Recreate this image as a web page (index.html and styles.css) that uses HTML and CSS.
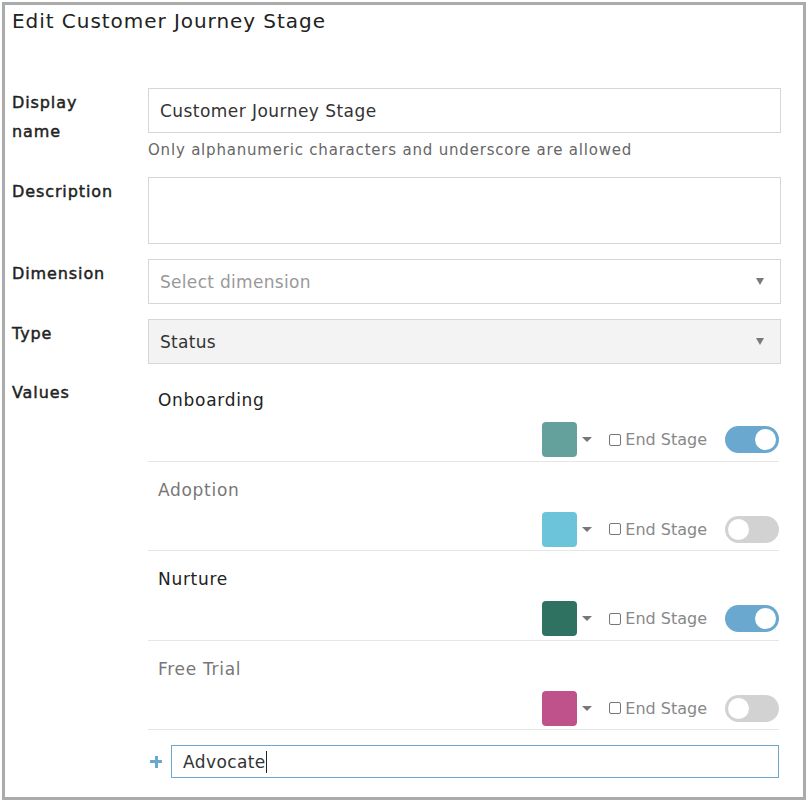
FILE: index.html
```html
<!DOCTYPE html>
<html>
<head>
<meta charset="utf-8">
<link rel="stylesheet" href="styles.css">
</head>
<body>
<div class="dialog">
  <h1 class="title">Edit Customer Journey Stage</h1>
  <div class="form">
    <div class="field">
      <div class="label">Display name</div>
      <div class="control">
        <div class="input">Customer Journey Stage</div>
        <div class="help">Only alphanumeric characters and underscore are allowed</div>
      </div>
    </div>
    <div class="field">
      <div class="label">Description</div>
      <div class="control"><div class="textarea"></div></div>
    </div>
    <div class="field">
      <div class="label">Dimension</div>
      <div class="control">
        <div class="select"><span class="placeholder">Select dimension</span><span class="caret"></span></div>
      </div>
    </div>
    <div class="field">
      <div class="label">Type</div>
      <div class="control">
        <div class="select disabled"><span>Status</span><span class="caret"></span></div>
      </div>
    </div>
    <div class="field values-field">
      <div class="label values-label">Values</div>
      <div class="control">
        <div class="value-row">
          <div class="value-name">Onboarding</div>
          <div class="value-controls">
            <span class="swatch" style="background:#64a09c"></span><span class="swatch-caret"></span>
            <label class="end-stage"><span class="checkbox"></span>End Stage</label>
            <span class="toggle on"><span class="knob"></span></span>
          </div>
        </div>
        <div class="value-row">
          <div class="value-name inactive">Adoption</div>
          <div class="value-controls">
            <span class="swatch" style="background:#6bc4da"></span><span class="swatch-caret"></span>
            <label class="end-stage"><span class="checkbox"></span>End Stage</label>
            <span class="toggle"><span class="knob"></span></span>
          </div>
        </div>
        <div class="value-row">
          <div class="value-name">Nurture</div>
          <div class="value-controls">
            <span class="swatch" style="background:#2f7262"></span><span class="swatch-caret"></span>
            <label class="end-stage"><span class="checkbox"></span>End Stage</label>
            <span class="toggle on"><span class="knob"></span></span>
          </div>
        </div>
        <div class="value-row">
          <div class="value-name inactive">Free Trial</div>
          <div class="value-controls">
            <span class="swatch" style="background:#c0528b"></span><span class="swatch-caret"></span>
            <label class="end-stage"><span class="checkbox"></span>End Stage</label>
            <span class="toggle"><span class="knob"></span></span>
          </div>
        </div>
        <div class="add-row">
          <span class="plus"></span>
          <div class="add-input">Advocate<span class="cursor"></span></div>
        </div>
      </div>
    </div>
  </div>
</div>
</body>
</html>
```
FILE: styles.css
```css
* { box-sizing: border-box; }
html, body { margin: 0; padding: 0; background: #fff; }
body {
  font-family: "DejaVu Sans", "Liberation Sans", sans-serif;
  color: #222;
  width: 810px;
  height: 806px;
  overflow: hidden;
}
.dialog {
  margin: 2px;
  width: 804px;
  height: 798px;
  border: 3px solid #ababab;
  padding: 4px 22px 0 7px;
}
.title {
  margin: 0;
  font-size: 20px;
  font-weight: 400;
  line-height: 24px;
  letter-spacing: 0.95px;
  color: #222;
}
.form {
  margin-top: 55px;
  display: flex;
  flex-direction: column;
  gap: 15px;
}
.field {
  display: grid;
  grid-template-columns: 136px 1fr;
}
.label {
  font-size: 16px;
  font-weight: 400;
  letter-spacing: 0.9px;
  -webkit-text-stroke: 0.45px #222;
  line-height: 29px;
  color: #222;
  padding-right: 30px;
}
.input, .select, .textarea {
  border: 1px solid #d6d6d6;
  height: 45px;
  padding: 0 11px;
  font-size: 17px;
  letter-spacing: 0.45px;
  color: #333;
  display: flex;
  align-items: center;
  background: #fff;
}
.select { letter-spacing: 0.3px; }
.textarea { height: 67px; }
.help {
  font-size: 15px;
  letter-spacing: 0.8px;
  color: #666;
  line-height: 21px;
  margin-top: 7px;
  margin-bottom: 1px;
}
.select { justify-content: space-between; padding-right: 16px; }
.select.disabled { background: #f3f3f3; }
.placeholder { color: #999; }
.caret {
  width: 0; height: 0;
  border-left: 4.5px solid transparent;
  border-right: 4.5px solid transparent;
  border-top: 7px solid #7a7a7a;
}
.values-field { margin-top: -7px; }
.values-label { padding-top: 6px; }
.value-row {
  border-bottom: 1px solid #e6e6e6;
  padding: 17px 0 3.5px 10px;
  margin-right: 2px;
}
.value-name {
  font-size: 17px;
  letter-spacing: 0.7px;
  line-height: 22px;
  color: #222;
}
.value-name.inactive { color: #777; }
.value-controls {
  margin-top: 11px;
  display: flex;
  align-items: center;
  justify-content: flex-end;
  height: 35px;
}
.swatch {
  width: 35px;
  height: 35px;
  border-radius: 4px;
}
.swatch-caret {
  margin-left: 5px;
  width: 0; height: 0;
  border-left: 5px solid transparent;
  border-right: 5px solid transparent;
  border-top: 5px solid #777;
}
.end-stage {
  margin-left: 17px;
  display: flex;
  align-items: center;
  font-size: 16px;
  color: #888;
}
.checkbox {
  width: 12px;
  height: 12px;
  border: 1px solid #777;
  border-radius: 2px;
  margin-right: 4px;
}
.toggle {
  margin-left: 18px;
  width: 54px;
  height: 27px;
  border-radius: 14px;
  background: #d2d2d2;
  display: flex;
  align-items: center;
  padding: 0 3px;
}
.toggle.on { background: #6aa8d0; justify-content: flex-end; }
.knob {
  width: 21px;
  height: 21px;
  border-radius: 50%;
  background: #fff;
}
.add-row {
  margin-top: 15px;
  display: flex;
  align-items: center;
  margin-right: 2px;
}
.plus {
  position: relative;
  width: 12px;
  height: 12px;
  margin: 0 9px 0 2px;
}
.plus::before, .plus::after {
  content: "";
  position: absolute;
  background: #6aa8d0;
}
.plus::before { left: 0; top: 4.5px; width: 12px; height: 3px; }
.plus::after { left: 4.5px; top: 0; width: 3px; height: 12px; }
.add-input {
  flex: 1;
  height: 33px;
  border: 1px solid #6aa8d0;
  padding: 0 11px;
  font-size: 17px;
  letter-spacing: 0.4px;
  color: #333;
  display: flex;
  align-items: center;
}
.cursor {
  display: inline-block;
  width: 1px;
  height: 22px;
  background: #222;
}
```
